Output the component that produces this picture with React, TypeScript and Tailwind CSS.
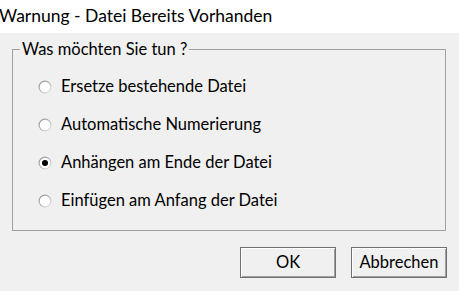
import React from "react";

const options = [
  { label: "Ersetze bestehende Datei", checked: false },
  { label: "Automatische Numerierung", checked: false },
  { label: "Anhängen am Ende der Datei", checked: true },
  { label: "Einfügen am Anfang der Datei", checked: false },
];

function Radio({ checked }: { checked: boolean }) {
  return (
    <svg width="14" height="14" viewBox="0 0 14 14" className="shrink-0">
      <defs>
        <linearGradient id="rg" x1="0" y1="0" x2="1" y2="1">
          <stop offset="0" stopColor="#8a8a8a" />
          <stop offset="1" stopColor="#e8e8e8" />
        </linearGradient>
      </defs>
      <circle cx="7" cy="7" r="6.5" fill="url(#rg)" />
      <circle cx="7" cy="7" r="5.3" fill="#ffffff" />
      {checked && <circle cx="7" cy="7" r="3" fill="#000000" />}
    </svg>
  );
}

export default function App() {
  return (
    <div
      className="w-[459px] h-[291px] bg-[#f0f0f0] flex flex-col overflow-hidden text-black"
      style={{ fontFamily: 'Lato, "Noto Sans", sans-serif' }}
    >
      <div className="h-[33px] bg-white flex items-center pl-0 pb-[1px] text-[17.5px] leading-none whitespace-nowrap -ml-[1px]">
        Warnung - Datei Bereits Vorhanden
      </div>
      <fieldset className="ml-[12px] mt-[7px] w-[434px] h-[191px] border border-[#a0a0a0] p-0 m-0">
        <legend className="ml-[7px] px-[2px] text-[16.5px] leading-[18px]">Was möchten Sie tun ?</legend>
        <div className="flex flex-col gap-[17px] pl-[25px] pt-[18px]">
          {options.map((o) => (
            <div key={o.label} className="flex items-center gap-[9px] h-[21px] text-[16.5px]">
              <Radio checked={o.checked} />
              <span>{o.label}</span>
            </div>
          ))}
        </div>
      </fieldset>
      <div className="flex justify-end gap-[15px] pr-[12px] mt-[16px]">
        {["OK", "Abbrechen"].map((t) => (
          <button
            key={t}
            className="w-[96px] h-[31px] border border-[#707070] bg-[#f0f0f0] shadow-[inset_1px_1px_0_#ffffff,inset_-1px_-1px_0_#a0a0a0] text-[16.5px] flex items-center justify-center"
          >
            {t}
          </button>
        ))}
      </div>
    </div>
  );
}
